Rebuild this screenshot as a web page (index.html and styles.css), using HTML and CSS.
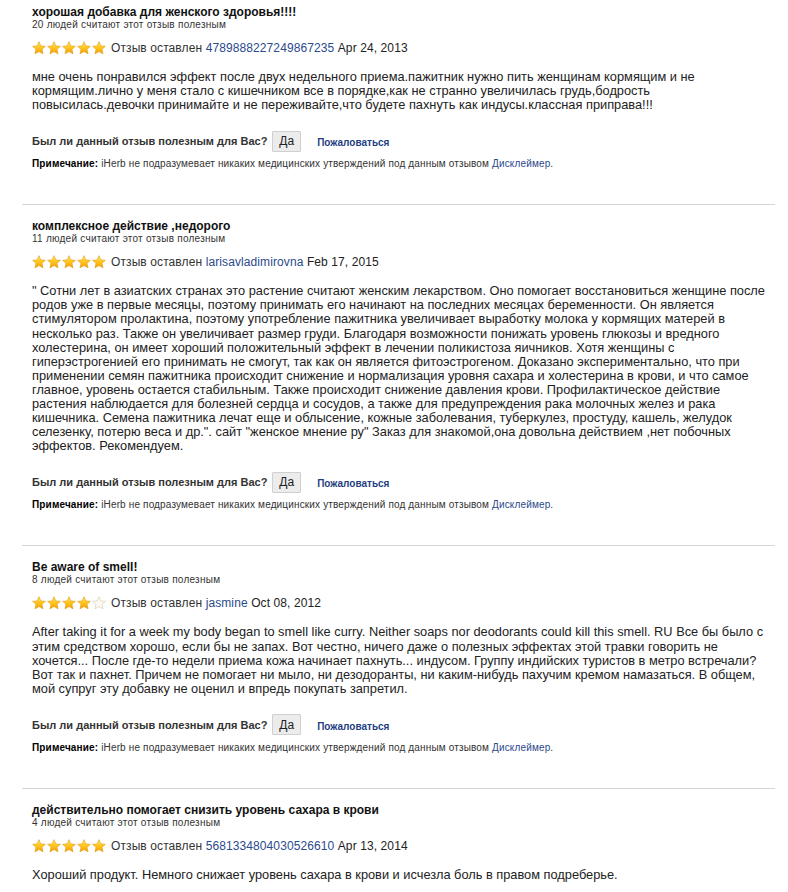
FILE: index.html
```html
<!DOCTYPE html>
<html lang="ru">
<head>
<meta charset="utf-8">
<link rel="stylesheet" href="styles.css">
</head>
<body>
<svg width="0" height="0" class="defs">
  <defs>
    <linearGradient id="gold" x1="0" y1="0" x2="0" y2="1">
      <stop offset="0" stop-color="#ffe96a"/>
      <stop offset="0.5" stop-color="#ffc61a"/>
      <stop offset="1" stop-color="#f29a00"/>
    </linearGradient>
    <symbol id="star" viewBox="0 0 16 16">
      <path d="M8 0.8 L10.1 5.6 L15.3 6.1 L11.4 9.5 L12.6 14.7 L8 12 L3.4 14.7 L4.6 9.5 L0.7 6.1 L5.9 5.6 Z" fill="url(#gold)" stroke="#e39a10" stroke-width="0.7" stroke-linejoin="round"/>
    </symbol>
    <symbol id="star-empty" viewBox="0 0 16 16">
      <path d="M8 0.8 L10.1 5.6 L15.3 6.1 L11.4 9.5 L12.6 14.7 L8 12 L3.4 14.7 L4.6 9.5 L0.7 6.1 L5.9 5.6 Z" fill="#fdfbf4" stroke="#d9cfb5" stroke-width="0.8" stroke-linejoin="round"/>
    </symbol>
  </defs>
</svg>
<div class="reviews">

  <div class="review">
    <div class="title">хорошая добавка для женского здоровья!!!!</div>
    <div class="count">20 людей считают этот отзыв полезным</div>
    <div class="meta">
      <span class="stars">
        <svg class="st"><use href="#star"/></svg><svg class="st"><use href="#star"/></svg><svg class="st"><use href="#star"/></svg><svg class="st"><use href="#star"/></svg><svg class="st"><use href="#star"/></svg>
      </span>
      <span class="by">Отзыв оставлен <a class="link">4789888227249867235</a> <span class="date">Apr 24, 2013</span></span>
    </div>
    <p class="body">мне очень понравился эффект после двух недельного приема.пажитник нужно пить женщинам кормящим и не<br>кормящим.лично у меня стало с кишечником все в порядке,как не странно увеличилась грудь,бодрость<br>повысилась.девочки принимайте и не переживайте,что будете пахнуть как индусы.классная приправа!!!</p>
    <div class="vote">
      <span class="q">Был ли данный отзыв полезным для Вас?</span>
      <span class="btn">Да</span>
      <a class="report">Пожаловаться</a>
    </div>
    <div class="note"><b>Примечание:</b> iHerb не подразумевает никаких медицинских утверждений под данным отзывом <a class="link">Дисклеймер</a>.</div>
  </div>

  <div class="review">
    <div class="title">комплексное действие ,недорого</div>
    <div class="count">11 людей считают этот отзыв полезным</div>
    <div class="meta">
      <span class="stars">
        <svg class="st"><use href="#star"/></svg><svg class="st"><use href="#star"/></svg><svg class="st"><use href="#star"/></svg><svg class="st"><use href="#star"/></svg><svg class="st"><use href="#star"/></svg>
      </span>
      <span class="by">Отзыв оставлен <a class="link">larisavladimirovna</a> <span class="date">Feb 17, 2015</span></span>
    </div>
    <p class="body">" Сотни лет в азиатских странах это растение считают женским лекарством. Оно помогает восстановиться женщине после родов уже в первые месяцы, поэтому принимать его начинают на последних месяцах беременности. Он является стимулятором пролактина, поэтому употребление пажитника увеличивает выработку молока у кормящих матерей в несколько раз. Также он увеличивает размер груди. Благодаря возможности понижать уровень глюкозы и вредного холестерина, он имеет хороший положительный эффект в лечении поликистоза яичников. Хотя женщины с гиперэстрогенией его принимать не смогут, так как он является фитоэстрогеном. Доказано экспериментально, что при применении семян пажитника происходит снижение и нормализация уровня сахара и холестерина в крови, и что самое главное, уровень остается стабильным. Также происходит снижение давления крови. Профилактическое действие растения наблюдается для болезней сердца и сосудов, а также для предупреждения рака молочных желез и рака кишечника. Семена пажитника лечат еще и облысение, кожные заболевания, туберкулез, простуду, кашель, желудок селезенку, потерю веса и др.". сайт "женское мнение ру" Заказ для знакомой,она довольна действием ,нет побочных эффектов. Рекомендуем.</p>
    <div class="vote">
      <span class="q">Был ли данный отзыв полезным для Вас?</span>
      <span class="btn">Да</span>
      <a class="report">Пожаловаться</a>
    </div>
    <div class="note"><b>Примечание:</b> iHerb не подразумевает никаких медицинских утверждений под данным отзывом <a class="link">Дисклеймер</a>.</div>
  </div>

  <div class="review">
    <div class="title">Be aware of smell!</div>
    <div class="count">8 людей считают этот отзыв полезным</div>
    <div class="meta">
      <span class="stars">
        <svg class="st"><use href="#star"/></svg><svg class="st"><use href="#star"/></svg><svg class="st"><use href="#star"/></svg><svg class="st"><use href="#star"/></svg><svg class="st"><use href="#star-empty"/></svg>
      </span>
      <span class="by">Отзыв оставлен <a class="link">jasmine</a> <span class="date">Oct 08, 2012</span></span>
    </div>
    <p class="body">After taking it for a week my body began to smell like curry. Neither soaps nor deodorants could kill this smell. RU Все бы было с этим средством хорошо, если бы не запах. Вот честно, ничего даже о полезных эффектах этой травки говорить не хочется... После где-то недели приема кожа начинает пахнуть... индусом. Группу индийских туристов в метро встречали? Вот так и пахнет. Причем не помогает ни мыло, ни дезодоранты, ни каким-нибудь пахучим кремом намазаться. В общем, мой супруг эту добавку не оценил и впредь покупать запретил.</p>
    <div class="vote">
      <span class="q">Был ли данный отзыв полезным для Вас?</span>
      <span class="btn">Да</span>
      <a class="report">Пожаловаться</a>
    </div>
    <div class="note"><b>Примечание:</b> iHerb не подразумевает никаких медицинских утверждений под данным отзывом <a class="link">Дисклеймер</a>.</div>
  </div>

  <div class="review">
    <div class="title">действительно помогает снизить уровень сахара в крови</div>
    <div class="count">4 людей считают этот отзыв полезным</div>
    <div class="meta">
      <span class="stars">
        <svg class="st"><use href="#star"/></svg><svg class="st"><use href="#star"/></svg><svg class="st"><use href="#star"/></svg><svg class="st"><use href="#star"/></svg><svg class="st"><use href="#star"/></svg>
      </span>
      <span class="by">Отзыв оставлен <a class="link">5681334804030526610</a> <span class="date">Apr 13, 2014</span></span>
    </div>
    <p class="body">Хороший продукт. Немного снижает уровень сахара в крови и исчезла боль в правом подреберье.</p>
  </div>

</div>
</body>
</html>
```

FILE: styles.css
```css
html, body {
  margin: 0;
  padding: 0;
  background: #fff;
}
body {
  font-family: "Liberation Sans", Arial, sans-serif;
  color: #222;
  overflow: hidden;
}
.defs {
  position: absolute;
  width: 0;
  height: 0;
}
.reviews {
  padding-left: 22px;
  width: 753px;
}
.review {
  padding: 14px 0 34px 10px;
  border-bottom: 1px solid #d6d6d6;
}
.review:first-child {
  padding-top: 5px;
}
.title {
  font-size: 12px;
  font-weight: bold;
  line-height: 14px;
  color: #111;
}
.count {
  font-size: 10px;
  line-height: 12px;
  letter-spacing: 0.25px;
  color: #333;
}
.meta {
  margin-top: 9px;
  display: flex;
  align-items: center;
  height: 16px;
  font-size: 12px;
  letter-spacing: 0.1px;
  color: #333;
}
.stars {
  display: flex;
  gap: 1px;
  margin-right: 5px;
}
.st {
  width: 14px;
  height: 14px;
  display: block;
}
.link {
  color: #2b4a8c;
  text-decoration: none;
}
.date {
  color: #222;
}
.body {
  margin: 14px 0 0 0;
  font-size: 12.8px;
  line-height: 14.1px;
  color: #222;
}
.vote {
  margin-top: 18px;
  height: 22px;
  display: flex;
  align-items: center;
}
.q {
  font-size: 11px;
  font-weight: bold;
  color: #333;
}
.btn {
  margin-left: 5px;
  box-sizing: border-box;
  height: 21px;
  padding: 0 6px;
  display: flex;
  align-items: center;
  font-size: 12px;
  color: #222;
  background: #ececec;
  border: 1px solid #d0d0d0;
  border-radius: 1px;
}
.report {
  margin-left: 16px;
  font-size: 10px;
  font-weight: bold;
  color: #1f3f7f;
  padding-top: 3px;
}
.note {
  margin-top: 6px;
  font-size: 10px;
  line-height: 12px;
  letter-spacing: 0.15px;
  color: #333;
}
.note b {
  color: #000;
}
.review:last-child {
  border-bottom: none;
}
```
